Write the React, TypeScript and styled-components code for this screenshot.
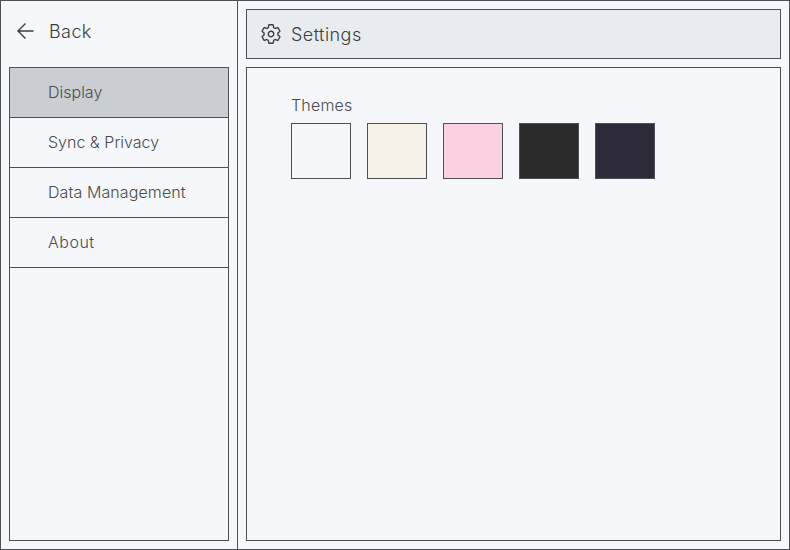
import React from 'react';
import styled, { createGlobalStyle } from 'styled-components';
import { IoSettingsOutline } from 'react-icons/io5';

const line = '#4f5055';

const GlobalStyle = createGlobalStyle`
  * { box-sizing: border-box; }
  body {
    margin: 0;
    background: #f5f7fb;
    color: #4a4b4f;
    font-family: Inter, 'Liberation Sans', sans-serif;
    font-weight: 300;
    font-size: 16px;
  }
`;

const Frame = styled.div`
  display: grid;
  grid-template-columns: 237px 1fr;
  width: 100vw;
  height: 100vh;
  border: 1px solid ${line};
`;

const Sidebar = styled.aside`
  display: flex;
  flex-direction: column;
  padding: 0 8px 8px;
  border-right: 1px solid ${line};
`;

const BackButton = styled.button`
  display: flex;
  align-items: center;
  gap: 15px;
  height: 66px;
  padding: 0 0 6px 7px;
  border: 0;
  background: none;
  color: #3d3e40;
  font: inherit;
  font-size: 18px;
  letter-spacing: 0.4px;
`;

const Menu = styled.nav`
  flex: 1;
  border: 1px solid ${line};
`;

const MenuItem = styled.div<{ $active?: boolean; $tracking: number }>`
  display: flex;
  align-items: center;
  height: 50px;
  padding: 0 0 1px 38px;
  border-bottom: 1px solid ${line};
  background: ${p => (p.$active ? '#cacdd1' : 'transparent')};
  letter-spacing: ${p => p.$tracking}px;
`;

const Main = styled.main`
  display: flex;
  flex-direction: column;
  gap: 8px;
  padding: 8px;
`;

const Header = styled.header`
  display: flex;
  align-items: center;
  gap: 9px;
  height: 50px;
  padding-left: 13px;
  border: 1px solid ${line};
  background: #e8ecf0;
  color: #3d3e40;
  font-size: 18px;
  letter-spacing: 0.45px;
`;

const Content = styled.section`
  flex: 1;
  padding: 27px 44px;
  border: 1px solid ${line};
`;

const Label = styled.div`
  height: 28px;
  line-height: 20px;
  letter-spacing: 0.17px;
`;

const Swatches = styled.div`
  display: flex;
  gap: 16px;
`;

const Swatch = styled.button<{ $color: string }>`
  width: 60px;
  height: 56px;
  padding: 0;
  border: 1px solid ${line};
  background: ${p => p.$color};
`;

const ArrowIcon = () => (
  <svg width="18" height="18" viewBox="0 0 18 18" fill="none" stroke="currentColor" strokeWidth="1.4">
    <path d="M9.5 1.5 2 9 9.5 16.5M2 9H17.5" />
  </svg>
);

const items = [
  { label: 'Display', tracking: 0 },
  { label: 'Sync & Privacy', tracking: 0 },
  { label: 'Data Management', tracking: 0.1 },
  { label: 'About', tracking: 0.5 },
];
const themes = ['#f5f7fb', '#f6f2e7', '#fad1e1', '#2b2b2b', '#2d2b3a'];

export default function App() {
  return (
    <>
      <GlobalStyle />
      <Frame>
        <Sidebar>
          <BackButton>
            <ArrowIcon />
            Back
          </BackButton>
          <Menu>
            {items.map((item, i) => (
              <MenuItem key={item.label} $active={i === 0} $tracking={item.tracking}>
                {item.label}
              </MenuItem>
            ))}
          </Menu>
        </Sidebar>
        <Main>
          <Header>
            <IoSettingsOutline size={22} />
            Settings
          </Header>
          <Content>
            <Label>Themes</Label>
            <Swatches>
              {themes.map(color => (
                <Swatch key={color} $color={color} />
              ))}
            </Swatches>
          </Content>
        </Main>
      </Frame>
    </>
  );
}
